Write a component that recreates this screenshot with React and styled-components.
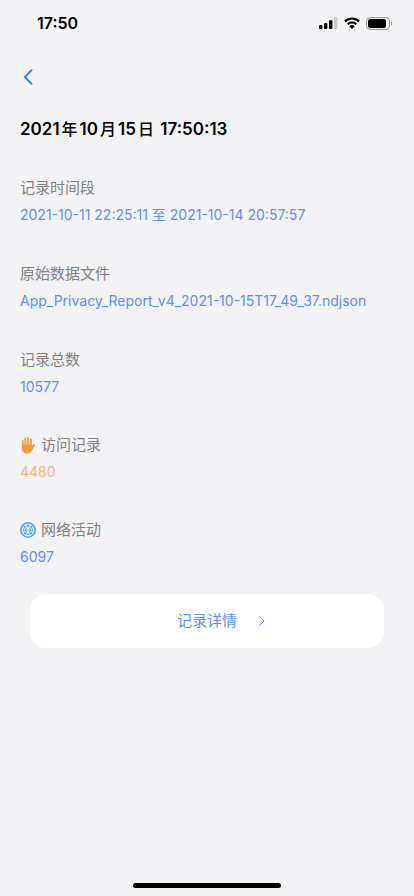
import React from "react";
import styled, { createGlobalStyle } from "styled-components";

const GlobalStyle = createGlobalStyle`
  * { box-sizing: border-box; }
  body {
    margin: 0;
    background: #f3f3f6;
    font-family: Inter, "Noto Sans CJK SC", sans-serif;
  }
`;

const Screen = styled.div`
  display: flex;
  flex-direction: column;
  min-height: 100vh;
`;

const StatusBar = styled.header`
  display: flex;
  align-items: center;
  justify-content: space-between;
  height: 46px;
  padding: 0 21px 0 37px;
`;

const Clock = styled.time`
  color: #000;
  font-size: 16px;
  font-weight: 600;
  line-height: 20px;
`;

const StatusIcons = styled.div`
  display: flex;
  align-items: center;
  gap: 6px;

  svg { display: block; }
`;

const NavBar = styled.nav`
  display: flex;
  align-items: center;
  height: 61px;
  padding: 0 12px;
`;

const BackButton = styled.button`
  display: flex;
  align-items: center;
  justify-content: center;
  width: 32px;
  height: 40px;
  padding: 0;
  border: 0;
  background: none;
  color: #2f7cf6;
  cursor: pointer;
`;

const Title = styled.h1`
  margin: 0;
  padding: 10px 20px 18px;
  color: #000;
  font-size: 17px;
  font-weight: 600;
  line-height: 24px;
`;

const DateUnit = styled.span`
  margin: 0 2px;
  font-size: 16px;
  font-weight: 500;
`;

const Records = styled.dl`
  margin: 0;
  padding-left: 20px;
`;

const Record = styled.div`
  display: flex;
  flex-direction: column;
  gap: 5px;
  padding: 18px 0 17px;
  border-bottom: ${(p) => (p.$divided ? "1px solid #f0f0f3" : "0")};

  & + & { padding-top: 19px; }
`;

const Label = styled.dt`
  display: flex;
  align-items: center;
  gap: 5px;
  color: #7f7f81;
  font-size: 15px;
  line-height: 22px;
`;

const Value = styled.dd`
  margin: 0;
  color: ${(p) => (p.$tone === "orange" ? "#f2b27f" : "#5b8ff9")};
  font-size: 14px;
  line-height: 22px;
  overflow-wrap: anywhere;
`;

const DetailButton = styled.button`
  display: flex;
  align-items: center;
  justify-content: center;
  gap: 21px;
  min-height: 54px;
  margin: 9px 30px 24px;
  padding: 0 0 0 28px;
  border: 0;
  border-radius: 16px;
  background: #fff;
  color: #5b8ff9;
  font-family: inherit;
  font-size: 15px;
  line-height: 22px;
  cursor: pointer;
`;

const HomeIndicator = styled.div`
  width: 148px;
  height: 5px;
  margin: auto auto 8px;
  border-radius: 3px;
  background: #000;
`;

const SignalIcon = () => (
  <svg width="19" height="12" viewBox="0 0 19 12" aria-hidden="true">
    <rect x="0" y="8" width="3.4" height="4" rx="1" />
    <rect x="5" y="6" width="3.4" height="6" rx="1" />
    <rect x="10" y="3.2" width="3.4" height="8.8" rx="1" />
    <rect x="15" y="0" width="3.4" height="12" rx="1" fill="#c9c9cb" />
  </svg>
);

const WifiIcon = () => (
  <svg width="16" height="12" viewBox="0 0 16 12" aria-hidden="true">
    <g fill="none" stroke="#000" strokeWidth="2.2">
      <path d="M.9 4.4a10.2 10.2 0 0 1 14.2 0" />
      <path d="M3.6 7.3a6.3 6.3 0 0 1 8.8 0" />
    </g>
    <path d="M5.3 9.3a3.8 3.8 0 0 1 5.4 0L8 12z" />
  </svg>
);

const BatteryIcon = () => (
  <svg width="27" height="13" viewBox="0 0 27 13" aria-hidden="true">
    <rect x=".5" y=".5" width="23" height="12" rx="3.6" fill="none" stroke="#98989b" />
    <rect x="2" y="2" width="18" height="9" rx="2.2" />
    <path d="M25 4.5c1.6.6 1.6 3.4 0 4z" fill="#98989b" />
  </svg>
);

const HandIcon = () => (
  <svg width="16" height="18" viewBox="0 0 16 18" aria-hidden="true">
    <g stroke="#f09a38" strokeLinecap="round" fill="none">
      <path d="M2.7 4.6v7M5.3 2.4v9M8.1 1.9v9M10.9 3.4v8" strokeWidth="1.7" />
      <path d="M13.9 9l-2.8 4.2" strokeWidth="2" />
    </g>
    <path
      d="M1.85 8.6h9.9v2l1.9-1.8.9.8-2.5 4.4C11 16.5 9.5 17.4 7.1 17.4c-3.5 0-5.25-2.3-5.25-5.5z"
      fill="#f09a38"
    />
  </svg>
);

const GlobeIcon = () => (
  <svg width="16" height="16" viewBox="0 0 16 16" aria-hidden="true">
    <circle cx="8" cy="8" r="7.2" fill="#e6f1f9" stroke="#559fd8" strokeWidth="1.5" />
    <g fill="none" stroke="#559fd8" strokeWidth=".6">
      <path d="M3 8.2h10M4.4 4.8L8 3.2l3.6 1.6 1.2 3.4-1.8 3.4L8 12.8l-3-1.2-1.8-3.4z" />
      <path d="M4.4 4.8l1.2 3.4L5 11.6M11.6 4.8l-1.2 3.4.6 3.4M5.6 8.2L8 3.2l2.4 5L8 12.8z" />
    </g>
    <g fill="#559fd8">
      <circle cx="8" cy="3.2" r=".9" />
      <circle cx="4.4" cy="4.8" r="1" />
      <circle cx="11.6" cy="4.8" r="1" />
      <circle cx="5.6" cy="8.2" r=".8" />
      <circle cx="10.4" cy="8.2" r=".8" />
      <circle cx="5" cy="11.6" r="1" />
      <circle cx="11" cy="11.6" r="1" />
    </g>
  </svg>
);

const records = [
  { label: "记录时间段", value: "2021-10-11 22:25:11 至 2021-10-14 20:57:57", divided: true },
  { label: "原始数据文件", value: "App_Privacy_Report_v4_2021-10-15T17_49_37.ndjson", divided: true },
  { label: "记录总数", value: "10577" },
  { label: "访问记录", value: "4480", tone: "orange", Icon: HandIcon },
  { label: "网络活动", value: "6097", Icon: GlobeIcon },
];

export default function App() {
  return (
    <Screen lang="zh-CN">
      <GlobalStyle />
      <StatusBar>
        <Clock>17:50</Clock>
        <StatusIcons>
          <SignalIcon />
          <WifiIcon />
          <BatteryIcon />
        </StatusIcons>
      </StatusBar>
      <NavBar>
        <BackButton type="button" aria-label="返回">
          <svg width="10" height="16" viewBox="0 0 10 16" aria-hidden="true">
            <path
              d="M8.6 1.2L1.8 8l6.8 6.8"
              fill="none"
              stroke="currentColor"
              strokeWidth="1.8"
              strokeLinecap="round"
              strokeLinejoin="round"
            />
          </svg>
        </BackButton>
      </NavBar>
      <main>
        <Title>
          2021<DateUnit>年</DateUnit>10<DateUnit>月</DateUnit>15<DateUnit>日</DateUnit> 17:50:13
        </Title>
        <Records>
          {records.map(({ label, value, divided, tone, Icon }) => (
            <Record key={label} $divided={divided}>
              <Label>
                {Icon && <Icon />}
                {label}
              </Label>
              <Value $tone={tone}>{value}</Value>
            </Record>
          ))}
        </Records>
      </main>
      <DetailButton type="button">
        记录详情
        <svg width="7" height="12" viewBox="0 0 7 12" aria-hidden="true">
          <path d="M1 .8L6 6l-5 5.2" fill="none" stroke="currentColor" />
        </svg>
      </DetailButton>
      <HomeIndicator />
    </Screen>
  );
}
